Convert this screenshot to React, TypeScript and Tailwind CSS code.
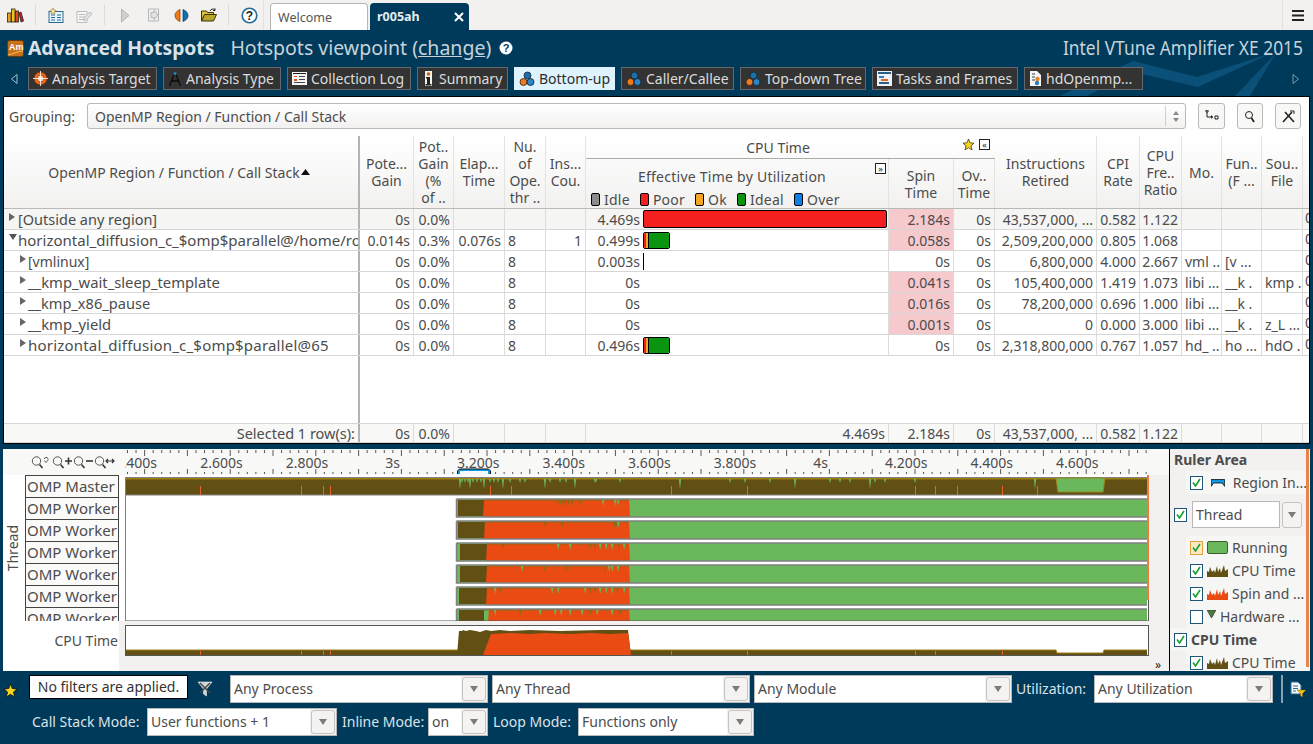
import React from "react";

const COLS = "grid grid-cols-[354px_2px_54px_40px_51px_41px_40px_303px_65px_41px_102px_43px_42px_40px_40px_41px_7px]";
const BALL = (
  <svg width="16" height="16" viewBox="0 0 16 16" className="shrink-0">
    <circle cx="8.5" cy="4.5" r="3.5" fill="#1d6fa8" stroke="#123" strokeWidth="0.8" />
    <circle cx="4.5" cy="11" r="3.5" fill="#ee7a1e" stroke="#321" strokeWidth="0.8" />
    <circle cx="11.5" cy="11" r="3.5" fill="#2a86c4" stroke="#123" strokeWidth="0.8" />
  </svg>
);

function NavBtn({ icon, label, active, w }: { icon: React.ReactNode; label: string; active?: boolean; w: string }) {
  return (
    <div className={`${w} h-[23px] flex items-center gap-[4px] pl-1 whitespace-nowrap overflow-hidden border ${active ? "bg-[#def3fd] border-[#def3fd] text-[#2d2d2d]" : "bg-[#333333] border-[#64686b] text-[#dcdcdc]"}`}>
      {icon}
      <span>{label}</span>
    </div>
  );
}

function Sel({ w, text, btn = "w-[24px]" }: { w: string; text: string; btn?: string }) {
  return (
    <div className={`${w} h-[28px] flex bg-[#f2f1f0] border border-[#b8b8b8] text-[#4c4c4c]`}>
      <div className="flex-1 bg-white pl-[3px] pb-[2px] flex items-center overflow-hidden whitespace-nowrap">{text}</div>
      <div className={`${btn} m-px rounded-[3px] border border-[#c4c4c4] bg-[#f4f3f2] flex items-center justify-center`}>
        <svg width="8" height="6" viewBox="0 0 8 6"><path d="M0 0h8L4 6z" fill="#7b7b7b" /></svg>
      </div>
    </div>
  );
}

function Check({ on = true, hot, className = "" }: { on?: boolean; hot?: boolean; className?: string }) {
  return (
    <div className={`w-[13px] h-[14px] shrink-0 border flex items-center justify-center ${hot ? "border-[#e5a23c] bg-[#fbe9c6]" : "border-[#1f5577] bg-white"} ${className}`}>
      {on && <svg width="9" height="9" viewBox="0 0 9 9"><path d="M1 4.5 3.5 8 8 1" fill="none" stroke="#16a12a" strokeWidth="1.6" /></svg>}
    </div>
  );
}

const Tri = () => <svg width="6" height="8" viewBox="0 0 6 8" className="shrink-0 mb-[5px]"><path d="M0 0l6 4-6 4z" fill="#666" /></svg>;
const TriD = () => <svg width="8" height="6" viewBox="0 0 8 6" className="shrink-0 mb-[7px]"><path d="M0 0h8L4 6z" fill="#555" /></svg>;

function Bar({ kind }: { kind: "full" | "short" | "line" | "none" }) {
  if (kind === "none") return <div className="w-[245px]" />;
  if (kind === "line") return <div className="w-[245px] h-[17px] flex"><div className="w-px h-full bg-black" /></div>;
  if (kind === "full")
    return <div className="w-[244px] mr-px h-[18px] bg-[#f41f1f] border border-black rounded-[2px]" />;
  return (
    <div className="w-[245px] h-[17px] flex">
      <div className="w-[27px] flex h-full border border-black rounded-[2px] overflow-hidden">
        <div className="w-[2px] bg-[#f41f1f]" />
        <div className="w-[3px] bg-[#f5a623] border-r border-black" />
        <div className="flex-1 bg-[#0a9410]" />
      </div>
    </div>
  );
}

type RowT = {
  tree: React.ReactNode; pote: string; pct: string; elap?: string; nu?: string; ins?: string; eff: string;
  bar: "full" | "short" | "line" | "none"; spin: string; pink?: boolean; ov: string; instr: string; cpi: string; fre: string; mo?: string; fun?: string; sou?: string; bg?: string;
};

const rows: RowT[] = [
  { tree: <div className="pl-[5px] flex items-center gap-[3px] text-[14.500px]"><Tri />[Outside any region]</div>, pote: "0s", pct: "0.0%", eff: "4.469s", bar: "full", spin: "2.184s", pink: true, ov: "0s", instr: "43,537,000, ...", cpi: "0.582", fre: "1.122", bg: "bg-[#f5f5f3]" },
  { tree: <div className="pl-[5px] flex items-center gap-px text-[15px]"><TriD />horizontal_diffusion_c_$omp$parallel@/home/ror</div>, pote: "0.014s", pct: "0.3%", elap: "0.076s", nu: "8", ins: "1", eff: "0.499s", bar: "short", spin: "0.058s", pink: true, ov: "0s", instr: "2,509,200,000", cpi: "0.805", fre: "1.068" },
  { tree: <div className="pl-[16px] flex items-center gap-[2px]"><Tri />[vmlinux]</div>, pote: "0s", pct: "0.0%", nu: "8", eff: "0.003s", bar: "line", spin: "0s", ov: "0s", instr: "6,800,000", cpi: "4.000", fre: "2.667", mo: "vml ..", fun: "[v ..." },
  { tree: <div className="pl-[16px] flex items-center gap-[2px] text-[14.800px]"><Tri />__kmp_wait_sleep_template</div>, pote: "0s", pct: "0.0%", nu: "8", eff: "0s", bar: "none", spin: "0.041s", pink: true, ov: "0s", instr: "105,400,000", cpi: "1.419", fre: "1.073", mo: "libi ...", fun: "__k .", sou: "kmp ." },
  { tree: <div className="pl-[16px] flex items-center gap-[2px] text-[14.600px]"><Tri />__kmp_x86_pause</div>, pote: "0s", pct: "0.0%", nu: "8", eff: "0s", bar: "none", spin: "0.016s", pink: true, ov: "0s", instr: "78,200,000", cpi: "0.696", fre: "1.000", mo: "libi ...", fun: "__k ." },
  { tree: <div className="pl-[16px] flex items-center gap-[2px] text-[14.800px]"><Tri />__kmp_yield</div>, pote: "0s", pct: "0.0%", nu: "8", eff: "0s", bar: "none", spin: "0.001s", pink: true, ov: "0s", instr: "0", cpi: "0.000", fre: "3.000", mo: "libi ...", fun: "__k .", sou: "z_L ..." },
  { tree: <div className="pl-[16px] flex items-center gap-[2px] text-[15px] tracking-[0.200px]"><Tri />horizontal_diffusion_c_$omp$parallel@65</div>, pote: "0s", pct: "0.0%", nu: "8", eff: "0.496s", bar: "short", spin: "0s", ov: "0s", instr: "2,318,800,000", cpi: "0.767", fre: "1.057", mo: "hd_ ..", fun: "ho ...", sou: "hdO ." },
];

const cell = "border-r border-[#dcdcdc] flex items-center overflow-hidden whitespace-nowrap";
const R = `${cell} justify-end pr-[3px]`;
const L = `${cell} pl-[3px]`;

function TableRow({ r }: { r: RowT }) {
  return (
    <div className={`${COLS} h-[21px] shrink-0 border-b border-[#d6d6d6] ${r.bg ?? "bg-white"}`}>
      <div className="overflow-hidden whitespace-nowrap flex items-center">{r.tree}</div>
      <div className="bg-[#b3b3b3]" />
      <div className={R}>{r.pote}</div>
      <div className={R}>{r.pct}</div>
      <div className={R}>{r.elap}</div>
      <div className={L}>{r.nu}</div>
      <div className={R}>{r.ins}</div>
      <div className={`${cell} justify-end gap-[3px] pr-0`}><span>{r.eff}</span><Bar kind={r.bar} /></div>
      <div className={`${R} ${r.pink ? "bg-[#f6c9cd]" : ""}`}>{r.spin}</div>
      <div className={R}>{r.ov}</div>
      <div className={R}>{r.instr}</div>
      <div className={R}>{r.cpi}</div>
      <div className={R}>{r.fre}</div>
      <div className={L}>{r.mo}</div>
      <div className={L}>{r.fun}</div>
      <div className={L}>{r.sou}</div>
      <div className="overflow-hidden pl-[2px]">0</div>
    </div>
  );
}

const hd = "border-r border-[#e4e4e2] flex items-center justify-center text-center leading-[17px]";

function Swatch({ c, t }: { c: string; t: string }) {
  return (
    <div className="flex items-center gap-[4px]">
      <div className={`w-[9px] h-[13px] rounded-[2px] border border-black ${c}`} />
      <span className="tracking-[0.250px]">{t}</span>
    </div>
  );
}

const worker = (y: number, h: number, xs: [number, number, number?, number?], spikes: number[]) => {
  const [bStart, bEnd, gEnd, oStart] = xs;
  return (
    <g key={y}>
      <rect x="457" y={y} width="690" height={h} fill="#6ab75c" />
      <rect x={bStart} y={y + 1} width={bEnd - bStart} height={h - 2} fill="#614f14" />
      {gEnd ? <rect x={bEnd} y={y + 1} width={gEnd - bEnd} height={h - 2} fill="#6ab75c" /> : null}
      <path d={`M${oStart ?? bEnd} ${y + 1}H629L630 ${y + h}H${(oStart ?? bEnd) - 1}Z`} fill="#ea4b12" />
      <rect x={bEnd} y={y} width={629 - bEnd} height="1.5" fill="#8a6a14" />
      {spikes.map((s) => <path key={s} d={`M${s - 1} ${y + 1}h2.4l-1.2 6z`} fill={s % 3 === 0 ? "#6ab75c" : "#8a6a14"} />)}
      <path d={`M456.5 ${y}H1147M456.5 ${y}V${y + h}${h > 14 ? "H1147" : ""}`} fill="none" stroke="#808080" strokeWidth="1.5" />
    </g>
  );
};

const ticks = Array.from({ length: 120 }, (_, i) => 127.5 + i * 8.56);

function ThreadChart() {
  const master = [460, 462, 465, 468, 470, 473, 477, 481, 484, 490, 494, 498, 503, 510, 520, 525, 545, 550, 560, 566, 575, 595, 596, 620, 680, 730, 745, 770, 795, 830, 840, 850, 870, 875, 885, 915, 1035];
  const red = [200, 301, 323, 330, 490, 511, 671, 747, 915, 935, 957, 1002, 1037];
  return (
    <svg className="block" width="1024" height="146" viewBox="125 475 1024 146">
      <rect x="125" y="475" width="1024" height="146" fill="#fff" />
      <rect x="125.5" y="477.5" width="1022" height="17.5" fill="#614f14" stroke="#808080" />
      <rect x="126" y="478" width="1021" height="1.5" fill="#a07f14" />
      <path d="M1056 478 1058 492H1103L1105 478Z" fill="#6ab75c" stroke="#9a8a20" />
      {master.map((x, i) => <path key={x} d={`M${x - 1.2} 479h2.4l-1.2 ${i % 4 === 0 ? 10 : 4}z`} fill="#6ab75c" />)}
      {red.map((x) => <rect key={x} x={x} y="486" width="1" height="9" fill="#e8622c" />)}
      {worker(499, 18, [458, 484], [557, 560, 563, 565, 568, 572, 580, 603, 615, 618])}
      {worker(521, 18, [458, 485], [545, 562, 614, 616, 618])}
      {worker(543, 18, [460, 487], [503, 558, 570, 590, 595, 600, 606, 612, 619, 624])}
      {worker(565, 18, [460, 487], [522, 544, 566, 605, 609, 612, 618])}
      {worker(587, 18, [459, 487], [495, 500, 552, 558, 585, 590, 595, 600, 606, 612, 617, 624])}
      {worker(609, 13, [459, 484, 487, 489], [495, 520, 540, 555, 561, 570, 582, 590, 597, 612, 620])}
      <rect x="1147" y="475" width="2" height="125" fill="#f07b3f" />
      <path d="M1148.5 600V621H125" fill="none" stroke="#555" />
      <path d="M125.5 477V621" fill="none" stroke="#808080" />
    </svg>
  );
}

function CpuChart() {
  return (
    <svg className="block" width="1024" height="31" viewBox="125 625 1024 31">
      <rect x="125.5" y="625.5" width="1023" height="30" fill="#fff" stroke="#555" />
      <path d="M126 650H1056L1057 653H1103L1104 650H1147V655H126Z" fill="#614f14" />
      <path d="M126 650H1056L1057 653H1103L1104 650H1147" fill="none" stroke="#a07f14" />
      <path d="M457 655 459 631H462L463 630 466 631 470 630 476 631 480 632 486 630 491 631 500 630 510 631 530 630 560 631 600 630 628 630 631 655Z" fill="#614f14" />
      <path d="M483 655 491 634 510 633 530 634 545 633 570 634 590 633 610 634 628 633 631 655Z" fill="#ea4b12" />
      {[200, 301, 323, 330, 671, 747, 915, 935, 1002].map((x) => <rect key={x} x={x} y="651" width="1" height="4" fill="#e8622c" />)}
    </svg>
  );
}

function Mag({ children }: { children?: React.ReactNode }) {
  return (
    <svg width="21" height="13" viewBox="0 0 21 13">
      <circle cx="5.5" cy="5" r="4.2" fill="none" stroke="#555" />
      <path d="M8.5 8.5 11.5 12" stroke="#333" strokeWidth="1.6" />
      {children}
    </svg>
  );
}

function LegendRow({ icon, text, on = true, hot, bold }: { icon?: React.ReactNode; text: string; on?: boolean; hot?: boolean; bold?: boolean }) {
  return (
    <div className={`h-[23px] shrink-0 flex items-center gap-[4px] bg-[#f6f6f5] ${bold ? "pl-[4px] font-bold" : "ml-[16px] pl-[4px]"} overflow-hidden whitespace-nowrap`}>
      <Check on={on} hot={hot} />
      {icon}
      <span>{text}</span>
    </div>
  );
}

const Peaks = ({ c }: { c: string }) => (
  <svg width="21" height="13" viewBox="0 0 21 13" className="shrink-0">
    <path d="M0 13V7L2 8 3 3 5 8 7 6 8 9 10 2 11 8 13 4 14 9 17 1 18 7 21 5V13Z" fill={c} />
  </svg>
);

const ToolSep = () => <div className="w-px h-[20px] bg-[#dcdbd9] mx-[11px]" />;

export default function App() {
  return (
    <div className="w-[1313px] h-[744px] overflow-hidden bg-[#003a5b] flex flex-col font-['Noto_Sans',sans-serif] text-[14px] leading-[17px] text-[#4c4c4c] relative">
      {/* toolbar */}
      <div className="h-[30px] shrink-0 bg-[#f2f1f0] flex items-center relative">
        <div className="flex items-center pl-[7px] w-[263px]">
          <svg width="17" height="15" viewBox="0 0 17 15">
            <rect x="0.5" y="5" width="3.5" height="9" fill="#f0a020" stroke="#222" strokeWidth="0.8" />
            <rect x="4.5" y="1" width="3.500" height="13" fill="#f0c020" stroke="#222" strokeWidth="0.8" />
            <rect x="8.5" y="3" width="3" height="11" fill="#e34a1a" stroke="#222" strokeWidth="0.8" />
            <path d="M12 5 14 4 16.5 13 14 14Z" fill="#c0222a" stroke="#222" strokeWidth="0.8" />
          </svg>
          <ToolSep />
          <svg width="16" height="15" viewBox="0 0 16 15" className="ml-[1px]">
            <rect x="1" y="3.5" width="14" height="11" fill="#e8f4fb" stroke="#2a6a96" />
            <path d="M3 7h4M9 7h4M3 9.5h4M9 9.5h4M3 12h4M9 12h4" stroke="#2a6a96" />
            <path d="M5 0 6 2 8 2.4 6.5 4 7 6 5 5 3 6 3.5 4 2 2.4 4 2Z" fill="#f5e6a0" stroke="#8a6a00" strokeWidth="0.5" />
          </svg>
          <svg width="17" height="15" viewBox="0 0 17 15" className="ml-[12px]">
            <path d="M1 3.5h10v11H1zM3 6.5h6M3 9h6M3 11.5h6" fill="#f4f4f4" stroke="#bcbcbc" />
            <path d="M8 10 14 4l2 2-6 6-2.500.5z" fill="#e4e4e4" stroke="#bcbcbc" />
          </svg>
          <ToolSep />
          <svg width="9" height="15" viewBox="0 0 9 15" className="ml-[5px]"><path d="M.5 1 8 7.500.5 14Z" fill="#cfcfcf" stroke="#b5b5b5" /></svg>
          <svg width="11" height="14" viewBox="0 0 11 14" className="ml-[18px]">
            <path d="M.5 1h10v12H.5z" fill="#f2f1f0" stroke="#b5b5b5" /><path d="M3 4.500h3V2l4 5-4 5V9.500H3z" fill="#e2e2e2" stroke="#b5b5b5" />
          </svg>
          <svg width="15" height="15" viewBox="0 0 15 15" className="ml-[15px]">
            <path d="M6 1.500C2.500 3 1 5 1 7.500S2.500 12 6 13.500Z" fill="#ef7b17" stroke="#7a3a00" strokeWidth="0.700" />
            <path d="M9 1.500C12.500 3 14 5 14 7.500S12.500 12 9 13.500Z" fill="#0f6fb0" stroke="#0a3a60" strokeWidth="0.700" />
          </svg>
          <svg width="16" height="14" viewBox="0 0 16 14" className="ml-[12px]">
            <path d="M.5 13V3h5l1 1.500h6V7H4Z" fill="#d9c33a" stroke="#3a3200" />
            <path d="M.5 13 3.500 6.500h12L12.500 13Z" fill="#b8a62c" stroke="#3a3200" />
            <path d="M9 3c1-2 3-2.500 5-1.500M14 .5v2h-2" fill="none" stroke="#222" />
          </svg>
          <ToolSep />
          <svg width="17" height="17" viewBox="0 0 17 17" className="ml-[1px]">
            <circle cx="8.500" cy="8.500" r="7.300" fill="#fff" stroke="#276b96" strokeWidth="1.600" />
            <text x="8.500" y="13" textAnchor="middle" fontSize="12" fontWeight="700" fill="#222" fontFamily="Liberation Sans">?</text>
          </svg>
        </div>
        <div className="w-px h-[30px] bg-[#e2e1df]" />
        <div className="flex self-end ml-[6px] gap-[2px] text-[12.500px]">
          <div className="w-[98px] h-[27px] bg-white border border-b-0 border-[#b5b5b3] rounded-t-[4px] pl-[7px] flex items-center text-[#555]">Welcome</div>
          <div className="w-[99px] h-[27px] bg-[#003a5b] rounded-t-[4px] pl-[7px] pr-[5px] flex items-center justify-between text-[#e4ecf0] font-bold">
            <span>r005ah</span>
            <svg width="10" height="10" viewBox="0 0 10 10"><path d="M1 1l8 8M9 1 1 9" stroke="#fff" strokeWidth="2" /></svg>
          </div>
        </div>
        <div className="ml-auto w-[31px] h-[30px] border-l border-[#e2e1df] flex items-center justify-center">
          <svg width="12" height="11" viewBox="0 0 12 11"><path d="M0 0h12v2H0zM0 4.500h12v2H0zM0 9h12v2H0z" fill="#222" /></svg>
        </div>
      </div>

      {/* decoration */}
      <svg className="absolute left-[1040px] top-[50px]" width="273" height="46" viewBox="0 0 273 46">
        <path d="M20 46 93 11 157 27 232 3 158 37 93 22 47 46Z" fill="#0a5078" />
        <path d="M195 46 236 3 210 46Z" fill="#0a5078" />
      </svg>

      {/* title */}
      <div className="h-[36px] shrink-0 flex items-center pl-[7px] relative">
        <svg width="17" height="17" viewBox="0 0 17 17" className="mr-[4px]">
          <rect x="0.500" y="0.500" width="16" height="16" rx="2" fill="#c9701c" stroke="#6a3a08" />
          <text x="2" y="10" fontSize="9" fontWeight="700" fill="#fff" fontFamily="Liberation Sans">Am</text>
          <path d="M1 15C6 14 11 11 16 11" stroke="#f5c06a" fill="none" />
        </svg>
        <span className="font-bold text-[19.300px] text-[#dbe3e8] leading-[24px]">Advanced Hotspots</span>
        <span className="ml-[16px] text-[19.500px] text-[#c6d3da] leading-[24px]">Hotspots viewpoint (<span className="underline">change</span>)</span>
        <svg width="14" height="14" viewBox="0 0 14 14" className="ml-[8px]">
          <circle cx="7" cy="7" r="6.500" fill="#fff" />
          <text x="7" y="11" textAnchor="middle" fontSize="11" fontWeight="700" fill="#003a5b" fontFamily="Liberation Sans">?</text>
        </svg>
        <span className="ml-auto mr-[10px] text-[20px] text-[#c6d3da] leading-[24px] scale-x-[0.870] origin-right whitespace-nowrap">Intel VTune Amplifier XE 2015</span>
      </div>

      {/* nav */}
      <div className="h-[30px] shrink-0 flex items-start pt-[1px] pl-[11px] gap-[6px] relative">
        <svg width="7" height="10" viewBox="0 0 7 10" className="mt-[7px] mr-[4px]"><path d="M6 .5V9.500L.5 5Z" fill="none" stroke="#a9bcc7" /></svg>
        <NavBtn w="w-[129px]" label="Analysis Target" icon={<svg width="15" height="15" viewBox="0 0 15 15"><circle cx="7.500" cy="7.500" r="6.500" fill="#e86a1a" stroke="#7a3208" /><circle cx="7.500" cy="7.500" r="3.500" fill="#f8d4b0" stroke="#c04a10" /><path d="M7.500 0v15M0 7.500h15" stroke="#fff" strokeWidth="0.800" /></svg>} />
        <NavBtn w="w-[118px]" label="Analysis Type" icon={<svg width="14" height="16" viewBox="0 0 14 16"><path d="M7 1 1.500 15M7 1l5.500 14M3.500 10h7" fill="none" stroke="#0b0b0b" strokeWidth="1.300" /><circle cx="7" cy="2.500" r="1.500" fill="#2a86c4" /></svg>} />
        <NavBtn w="w-[124px]" label="Collection Log" icon={<svg width="15" height="13" viewBox="0 0 15 13"><rect width="15" height="13" fill="#f5f5f5" /><path d="M1 1h13v1H1z" fill="#222" /><path d="M2 4h3v1H2zM2 7h3v2H2z" fill="#d9541e" /><path d="M7 4h6v1H7zM7 7h6v1H7zM2 10h11v1H2z" fill="#445" /></svg>} />
        <NavBtn w="w-[91px]" label="Summary" icon={<svg width="13" height="15" viewBox="0 0 13 15"><rect x="3" y="0" width="7" height="15" fill="#f4f1e6" /><circle cx="6.500" cy="3" r="1.800" fill="#c4631a" /><path d="M4 6h4v7h1.500v1.500h-6V13H5V7.500H4z" fill="#222" /></svg>} />
        <NavBtn active w="w-[101px]" label="Bottom-up" icon={BALL} />
        <NavBtn w="w-[113px]" label="Caller/Callee" icon={BALL} />
        <NavBtn w="w-[126px]" label="Top-down Tree" icon={BALL} />
        <NavBtn w="w-[146px]" label="Tasks and Frames" icon={<svg width="15" height="15" viewBox="0 0 15 15"><rect width="15" height="15" fill="#eef2f6" /><path d="M1 1h13v2H1z" fill="#2a5f8a" /><path d="M2 5h5v2H2z" fill="#2a7fc4" /><path d="M4 8h7v2H4z" fill="#e8641e" /><path d="M2 11h10v2H2z" fill="#2a5f8a" /></svg>} />
        <NavBtn w="w-[119px]" label="hdOpenmp..." icon={<svg width="13" height="15" viewBox="0 0 13 15"><path d="M1 0h7l4 4v11H1z" fill="#f5f5f5" /><path d="M3 3h3M3 6h3M3 9h3" stroke="#345" /><circle cx="8.500" cy="8" r="2.200" fill="#e8841e" /><circle cx="8" cy="12" r="2.200" fill="#2a7fc4" /></svg>} />
        <svg width="7" height="10" viewBox="0 0 7 10" className="mt-[7px] ml-auto mr-[14px]"><path d="M1 .5V9.500L6.500 5Z" fill="none" stroke="#7d98a8" /></svg>
      </div>

      {/* main panel */}
      <div className="h-[348px] shrink-0 mx-[3px] bg-white border border-black flex flex-col overflow-hidden">
        <div className="h-[39px] shrink-0 flex items-start pt-[6px] pl-[5px]">
          <div className="w-[78px] h-[26px] flex items-center">Grouping:</div>
          <div className="w-[1099px] h-[26px] border border-[#b9b9b7] rounded-[3px] bg-gradient-to-b from-white to-[#f2f1f0] flex items-center pl-[7px]">
            <span className="flex-1">OpenMP Region / Function / Call Stack</span>
            <div className="w-[20px] h-[20px] border-l border-[#cfcfcd] flex flex-col items-center justify-center gap-[3px]">
              <svg width="6" height="4" viewBox="0 0 6 4"><path d="M0 4h6L3 0z" fill="#888" /></svg>
              <svg width="6" height="4" viewBox="0 0 6 4"><path d="M0 0h6L3 4z" fill="#888" /></svg>
            </div>
          </div>
          <div className="ml-[12px] w-[27px] h-[26px] border border-[#b9b9b7] rounded-[3px] bg-[#f8f8f7] flex items-center justify-center">
            <svg width="14" height="12" viewBox="0 0 14 12"><path d="M1 0h2v2H1zM10 6h3v3h-3zM2 2v5h6" fill="none" stroke="#222" /><path d="M6 5l2 2-2 2z" fill="#222" /></svg>
          </div>
          <div className="ml-[12px] w-[26px] h-[26px] border border-[#b9b9b7] rounded-[3px] bg-[#f8f8f7] flex items-center justify-center">
            <svg width="12" height="13" viewBox="0 0 12 13"><circle cx="5" cy="5" r="3.500" fill="none" stroke="#222" /><path d="M7.500 8 10 12" stroke="#222" strokeWidth="1.800" /></svg>
          </div>
          <div className="ml-[12px] w-[26px] h-[26px] border border-[#b9b9b7] rounded-[3px] bg-[#f8f8f7] flex items-center justify-center">
            <svg width="13" height="13" viewBox="0 0 13 13"><path d="M1 12 10 2M3 2l9 10" stroke="#222" strokeWidth="1.600" /><path d="M8 1h4v3" fill="none" stroke="#222" /></svg>
          </div>
        </div>

        {/* header */}
        <div className={`${COLS} h-[73px] shrink-0 border-b border-[#b9b9b7] bg-gradient-to-b from-white to-[#f2f1f0]`}>
          <div className="flex items-center justify-center gap-px pr-[4px]">
            <span>OpenMP Region / Function / Call Stack</span>
            <svg width="9" height="6" viewBox="0 0 9 6"><path d="M0 6h9L4.500 0z" fill="#111" /></svg>
          </div>
          <div className="bg-[#b3b3b3]" />
          <div className={hd}>Pote...<br />Gain</div>
          <div className={hd}>Pot..<br />Gain<br />(%<br />of ..</div>
          <div className={hd}>Elap...<br />Time</div>
          <div className={hd}>Nu.<br />of<br />Ope.<br />thr ..</div>
          <div className={hd}>Ins...<br />Cou.</div>
          <div className="col-span-3 flex flex-col">
            <div className="h-[23px] shrink-0 border-b border-[#aaaaa8] flex items-center relative">
              <span className="w-[384px] text-center">CPU Time</span>
              <svg width="11" height="11" viewBox="0 0 11 11" className="absolute left-[377px] top-[3px]"><path d="M5.500 0 7 3.800 11 4.200 8 6.800 9 11 5.500 8.700 2 11 3 6.800 0 4.200 4 3.800Z" fill="#f7d51d" stroke="#222" strokeWidth="0.700" /></svg>
              <div className="absolute left-[393px] top-[3px] w-[11px] h-[11px] border border-[#222] flex items-center justify-center text-[9px] leading-none text-[#222] bg-white">«</div>
            </div>
            <div className="flex-1 grid grid-cols-[303px_65px_41px]">
              <div className="border-r border-[#e4e4e2] flex flex-col items-center relative pt-[9px]">
                <span className="w-[292px] text-center pr-[10px] tracking-[0.250px]">Effective Time by Utilization</span>
                <div className="absolute left-[289px] top-[4px] w-[11px] h-[11px] border border-[#222] flex items-center justify-center text-[9px] leading-none text-[#222] bg-white">»</div>
                <div className="self-start flex items-center pl-[5px] mt-[6px] gap-[10px]">
                  <Swatch c="bg-[#8c8c8c]" t="Idle" />
                  <Swatch c="bg-[#f41f1f]" t="Poor" />
                  <Swatch c="bg-[#f5a623]" t="Ok" />
                  <Swatch c="bg-[#0a9410]" t="Ideal" />
                  <Swatch c="bg-[#0f7fe8]" t="Over" />
                </div>
              </div>
              <div className={hd}>Spin<br />Time</div>
              <div className={hd}>Ov..<br />Time</div>
            </div>
          </div>
          <div className={hd}>Instructions<br />Retired</div>
          <div className={hd}>CPI<br />Rate</div>
          <div className={hd}>CPU<br />Fre..<br />Ratio</div>
          <div className={hd}>Mo.</div>
          <div className={hd}>Fun..<br />(F ...</div>
          <div className={hd}>Sou..<br />File</div>
          <div />
        </div>

        {/* rows + empty area */}
        <div className="flex-1 flex flex-col min-h-0">
          {rows.map((r, i) => <TableRow key={i} r={r} />)}
          <div className={`${COLS} flex-1`}>
            <div /><div className="bg-[#b3b3b3]" />
          </div>
        </div>

        {/* footer */}
        <div className={`${COLS} h-[20px] shrink-0 border-y border-[#d6d6d6] bg-[#f8f8f7]`}>
          <div className="flex items-center justify-end pr-[3px] text-[14.500px]">Selected 1 row(s):</div>
          <div className="bg-[#b3b3b3]" />
          <div className={R}>0s</div>
          <div className={R}>0.0%</div>
          <div className={R}></div>
          <div className={R}></div>
          <div className={R}></div>
          <div className={R}>4.469s</div>
          <div className={R}>2.184s</div>
          <div className={R}>0s</div>
          <div className={R}>43,537,000, ...</div>
          <div className={R}>0.582</div>
          <div className={R}>1.122</div>
          <div className={R}></div>
          <div className={R}></div>
          <div className={R}></div>
          <div />
        </div>
      </div>

      {/* timeline */}
      <div className="h-[222px] shrink-0 mt-[5px] mx-[3px] bg-[#f2f1f0] flex overflow-hidden">
        <div className="w-[1166px] shrink-0 flex flex-col relative">
          <div className="flex h-[26px] shrink-0 bg-[#f8f8f7]">
            <div className="w-[122px] shrink-0 pl-[28px] pt-[7px] flex bg-[#f8f8f7]">
              <Mag><path d="M13 3c1-2 3-2 4-.5.8 1-1 3-2 4l-1.500-2" fill="none" stroke="#555" /></Mag>
              <Mag><path d="M13 5h7M16.500 1.500v7" stroke="#333" strokeWidth="1.600" /></Mag>
              <Mag><path d="M13 5h7" stroke="#333" strokeWidth="1.600" /></Mag>
              <Mag><path d="M12 5h8M14 3l-2 2 2 2M18 3l2 2-2 2" fill="none" stroke="#333" strokeWidth="1.200" /></Mag>
            </div>
            <div className="w-[1024px] shrink-0 relative overflow-hidden">
              <svg className="absolute inset-0" width="1024" height="26" viewBox="125 449 1024 26">
                {ticks.map((x, i) => <path key={i} d={`M${x} 450v${i % 5 === 2 ? 6 : 3}M${x} 474v-${i % 5 === 2 ? 5 : 2}`} stroke="#555" />)}
                <path d="M457.500 474v-3l2-2h29l2 2v3" fill="#0d9be8" stroke="#111" />
                <rect x="460" y="471" width="28" height="3" fill="#f8f8f7" />
              </svg>
              <div className="flex ml-[-32px] pt-[5px] relative text-[14px] whitespace-nowrap">
                {["2.400s", "2.600s", "2.800s", "3s", "3.200s", "3.400s", "3.600s", "3.800s", "4s", "4.200s", "4.400s", "4.600s"].map((t) => (
                  <div key={t} className="w-[85.600px] shrink-0 text-center">{t}</div>
                ))}
              </div>
            </div>
          </div>
          <div className="flex shrink-0">
            <div className="w-[22px] shrink-0 bg-white flex items-center justify-center h-[146px] pr-[3px]">
              <span className="[writing-mode:vertical-rl] rotate-180">Thread</span>
            </div>
            <div className="w-[94px] shrink-0 h-[146px] overflow-hidden border-x border-[#444] text-[15px]">
              {["OMP Master", "OMP Worker", "OMP Worker", "OMP Worker", "OMP Worker", "OMP Worker", "OMP Worker"].map((t, i) => (
                <div key={i} className="h-[22px] border-t border-[#444] bg-[#fafaf9] flex items-center pl-[1px] whitespace-nowrap">{t}</div>
              ))}
            </div>
            <div className="w-[6px] shrink-0 bg-white" />
            <ThreadChart />
          </div>
          <div className="flex-1 flex">
            <div className="w-[116px] shrink-0 bg-white flex items-start justify-end pr-[1px] pt-[8px] h-full">
              <span className="mt-[3px]">CPU Time</span>
            </div>
            <div className="w-[6px] shrink-0 bg-[#f2f1f0]" />
            <div className="pt-[4px] flex flex-col">
              <CpuChart />
              <div className="flex-1 flex justify-end items-end text-[#222] text-[12px] pb-[2px]">
                <span className="mr-[-12px]">»</span>
              </div>
            </div>
          </div>
        </div>
        <div className="flex-1 border-l border-black bg-[#f2f1f0] flex flex-col relative overflow-hidden pr-[3px]">
          <div className="h-[21px] shrink-0 pl-[4px] flex items-center font-bold">Ruler Area</div>
          <div className="mt-[1px] shrink-0"><LegendRow text="Region In..." icon={<svg width="16" height="10" viewBox="0 0 16 10" className="mx-[4px]"><path d="M0 9V1h16v8l-3-4H3Z" fill="#0d9be8" stroke="#111" /></svg>} /></div>
          <div className="h-[27px] shrink-0 mt-[7px] pl-[4px] flex items-center gap-[5px]">
            <Check />
            <div className="w-[88px] h-[27px] bg-white border border-[#b8b8b8] pl-[3px] flex items-center">Thread</div>
            <div className="w-[20px] h-[26px] rounded-[3px] border border-[#c4c4c4] bg-[#f4f3f2] flex items-center justify-center ml-[-3px]">
              <svg width="8" height="6" viewBox="0 0 8 6"><path d="M0 0h8L4 6z" fill="#7b7b7b" /></svg>
            </div>
          </div>
          <div className="mt-[8px] shrink-0"><LegendRow hot text="Running" icon={<div className="w-[21px] h-[13px] rounded-[2px] bg-[#6ab75c] border border-[#3c5c30]" />} /></div>
          <LegendRow text="CPU Time" icon={<Peaks c="#614f14" />} />
          <LegendRow text="Spin and ..." icon={<Peaks c="#ea4b12" />} />
          <LegendRow on={false} text="Hardware ..." icon={<svg width="9" height="9" viewBox="0 0 9 9" className="mb-[5px]"><path d="M0 0h9L4.500 8z" fill="#4c7a3c" stroke="#222" strokeWidth="0.600" /></svg>} />
          <LegendRow bold text="CPU Time" />
          <LegendRow text="CPU Time" icon={<Peaks c="#614f14" />} />
          <div className="absolute right-[1px] top-0 bottom-[4px] w-[3px] bg-[#e8844a]" />
        </div>
      </div>

      {/* filters */}
      <div className="flex-1 flex flex-col">
        <div className="h-[32px] mt-[4px] flex items-start">
          <svg width="13" height="13" viewBox="0 0 11 11" className="ml-[4px] mt-[9px]"><path d="M5.500 0 7 3.800 11 4.200 8 6.800 9 11 5.500 8.700 2 11 3 6.800 0 4.200 4 3.800Z" fill="#f7d51d" stroke="#111" strokeWidth="0.700" /></svg>
          <div className="ml-[12px] w-[159px] h-[24px] bg-white border border-black text-[#333] flex items-center justify-center whitespace-nowrap pb-[1px]">No filters are applied.</div>
          <svg width="16" height="16" viewBox="0 0 16 16" className="ml-[9px] mt-[6px]"><path d="M1 1 15 1 9.500 8V15L6.500 13V8Z" fill="#cfd3d6" stroke="#eee" strokeWidth="0.600" /><path d="M3 2 13 12M13 2 3 12" stroke="#444" strokeWidth="1.400" /></svg>
          <div className="ml-[17px] flex gap-[4px]">
            <Sel w="w-[258px]" text="Any Process" />
            <Sel w="w-[258px]" text="Any Thread" />
            <Sel w="w-[258px]" text="Any Module" />
          </div>
          <div className="ml-[4px] h-[28px] pb-[2px] flex items-center text-[#dbe3e8] w-[78px]">Utilization:</div>
          <Sel w="w-[179px]" text="Any Utilization" />
          <div className="ml-[8px] w-[2px] h-[28px] bg-[#8aa0ad]" />
          <svg width="16" height="16" viewBox="0 0 16 16" className="ml-[7px] mt-[6px]"><path d="M1 1h7l3 3v9H1z" fill="#f4f8fc" stroke="#2a6a96" /><path d="M3 5h5M3 7.500h5M3 10h3" stroke="#2a6a96" /><path d="M7 9h9l-3.500 3.500V16L10.500 15V12.500Z" fill="#f5c518" stroke="#7a5a00" strokeWidth="0.500" /></svg>
        </div>
        <div className="h-[28px] mt-[1px] flex items-center pl-[32px]">
          <span className="text-[#dbe3e8] w-[115px] whitespace-nowrap pb-[2px]">Call Stack Mode:</span>
          <Sel w="w-[190px]" text="User functions + 1" />
          <span className="text-[#dbe3e8] ml-[5px] w-[86px] whitespace-nowrap pb-[2px]">Inline Mode:</span>
          <Sel w="w-[60px]" text="on" />
          <span className="text-[#dbe3e8] ml-[5px] w-[85px] whitespace-nowrap pb-[2px]">Loop Mode:</span>
          <Sel w="w-[176px]" text="Functions only" />
        </div>
      </div>
    </div>
  );
}
